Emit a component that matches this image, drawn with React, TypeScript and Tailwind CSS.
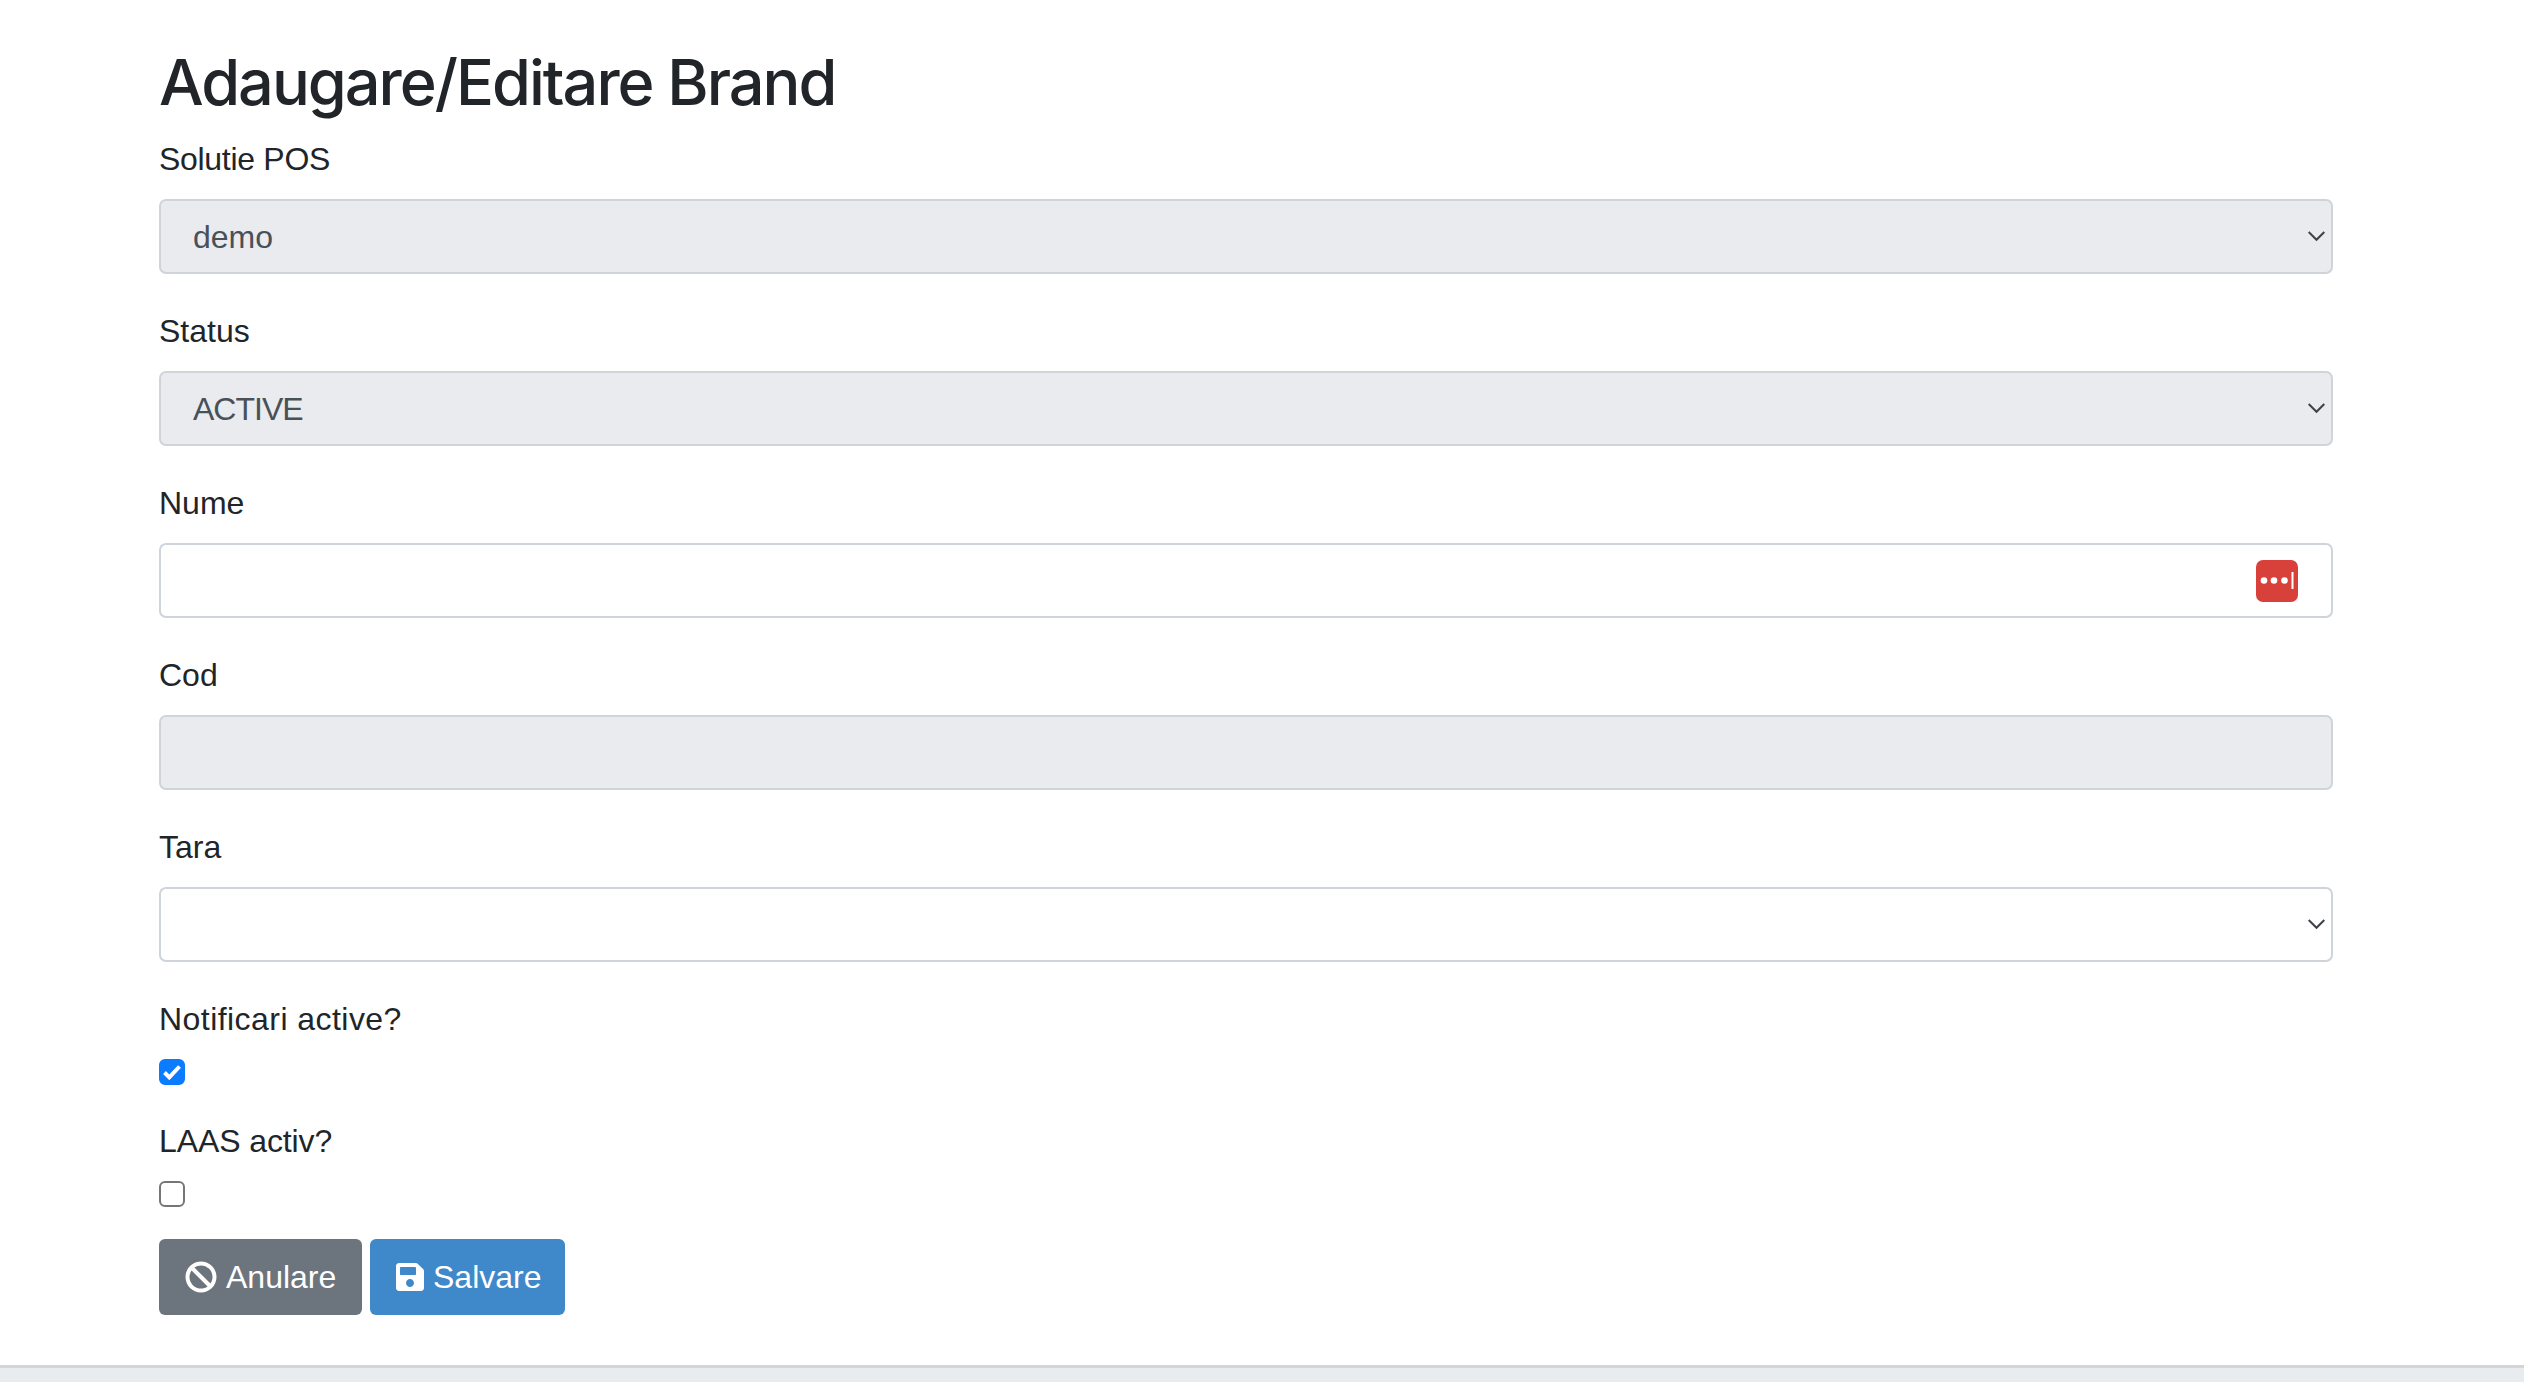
import { FaBan, FaSave } from 'react-icons/fa';

const labelClass = 'block text-[32px] leading-[48px] mb-[16px] text-[#212529]';
const fieldClass =
  'block w-full h-[75px] rounded-[7px] border-2 border-[#ced4da] pl-[32px] pr-[60px] text-[32px] text-[#495057] appearance-none outline-none';

function Chevron() {
  return (
    <svg className="absolute right-[8px] top-[31px] pointer-events-none" width="17" height="16" viewBox="0 0 17 16" fill="none">
      <path d="M0.7 2l7.8 7.8L16.3 2" stroke="#3f4248" strokeWidth="2" />
    </svg>
  );
}

function SelectField({
  label,
  value,
  disabled,
  labelTracking = '',
  valueTracking = '',
}: {
  label: string;
  value: string;
  disabled?: boolean;
  labelTracking?: string;
  valueTracking?: string;
}) {
  return (
    <div className="mb-[33px]">
      <label className={`${labelClass} ${labelTracking}`}>{label}</label>
      <div className="relative">
        <select
          defaultValue={value}
          disabled={disabled}
          className={`${fieldClass} ${valueTracking} ${disabled ? 'bg-[#e9ebef] opacity-100' : 'bg-white'}`}
        >
          <option value={value}>{value}</option>
        </select>
        <Chevron />
      </div>
    </div>
  );
}

function CheckField({ label, checked, labelTracking = '' }: { label: string; checked?: boolean; labelTracking?: string }) {
  return (
    <div className="mb-[32px]">
      <label className={`${labelClass} ${labelTracking}`}>{label}</label>
      <div className="relative w-[26px] h-[26px]">
        <input
          type="checkbox"
          defaultChecked={checked}
          className={`block w-[26px] h-[26px] rounded-[6px] appearance-none border-2 ${
            checked ? 'bg-[#0b7bff] border-[#0b7bff]' : 'bg-white border-[#767676]'
          }`}
        />
        {checked && (
          <svg className="absolute left-0 top-0 pointer-events-none" width="26" height="26" viewBox="0 0 26 26" fill="none">
            <path d="M5.5 13.5l4.8 4.8L20.5 7.5" stroke="white" strokeWidth="4" />
          </svg>
        )}
      </div>
    </div>
  );
}

export default function App() {
  return (
    <div className="min-h-[1382px] bg-white font-['Liberation_Sans',Arial,sans-serif] flex flex-col">
      <div className="pl-[159px] pr-[191px] pt-[44px] flex-1">
        <h2 className="font-['Inter',sans-serif] text-[63px] leading-[77px] font-medium tracking-[-2px] text-[#212529] mb-[14px]">
          Adaugare/Editare Brand
        </h2>

        <SelectField label="Solutie POS" value="demo" disabled labelTracking="tracking-[-0.3px]" />
        <SelectField label="Status" value="ACTIVE" disabled valueTracking="tracking-[-1px]" />

        <div className="mb-[33px]">
          <label className={labelClass}>Nume</label>
          <div className="relative">
            <input type="text" className={`${fieldClass} bg-white`} />
            <svg className="absolute right-[35px] top-[17px]" width="42" height="42" viewBox="0 0 42 42">
              <rect width="42" height="42" rx="7" fill="#d8403a" />
              <circle cx="8" cy="20.5" r="3.3" fill="white" />
              <circle cx="18" cy="20.5" r="3.3" fill="white" />
              <circle cx="28.5" cy="20.5" r="3.3" fill="white" />
              <rect x="35.5" y="12" width="2" height="17" fill="white" />
            </svg>
          </div>
        </div>

        <div className="mb-[33px]">
          <label className={labelClass}>Cod</label>
          <input type="text" disabled className={`${fieldClass} bg-[#e9ebef]`} />
        </div>

        <SelectField label="Tara" value="" />

        <CheckField label="Notificari active?" checked labelTracking="tracking-[0.45px]" />
        <CheckField label="LAAS activ?" labelTracking="tracking-[-0.1px]" />

        <div className="flex gap-[8px]">
          <button className="h-[76px] w-[203px] rounded-[6px] bg-[#6c757d] text-white text-[32px] flex items-center pl-[26px] gap-[9px]">
            <FaBan className="w-[32px] h-[32px]" />
            Anulare
          </button>
          <button className="h-[76px] w-[195px] rounded-[6px] bg-[#3f88ca] text-white text-[32px] flex items-center pl-[26px] gap-[9px]">
            <FaSave className="w-[28px] h-[32px]" />
            Salvare
          </button>
        </div>
      </div>

      <div className="h-[17px] bg-[#e9ecef] border-t-[3px] border-[#d3d5d6]" />
    </div>
  );
}
